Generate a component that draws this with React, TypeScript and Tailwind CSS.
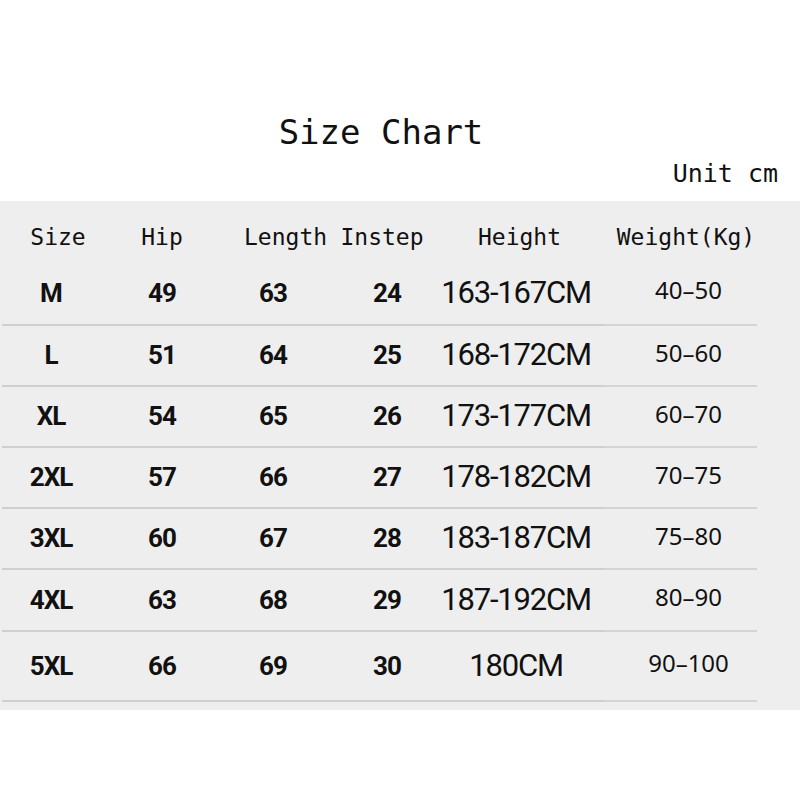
const rows = [
	{ size: 'M', hip: '49', length: '63', instep: '24', height: '163-167CM', weight: '40–50' },
	{ size: 'L', hip: '51', length: '64', instep: '25', height: '168-172CM', weight: '50–60' },
	{ size: 'XL', hip: '54', length: '65', instep: '26', height: '173-177CM', weight: '60–70' },
	{ size: '2XL', hip: '57', length: '66', instep: '27', height: '178-182CM', weight: '70–75' },
	{ size: '3XL', hip: '60', length: '67', instep: '28', height: '183-187CM', weight: '75–80' },
	{ size: '4XL', hip: '63', length: '68', instep: '29', height: '187-192CM', weight: '80–90' },
	{ size: '5XL', hip: '66', length: '69', instep: '30', height: '180CM', weight: '90–100' },
];

const rowHeights = ['h-[64px]', 'h-[61px]', 'h-[61px]', 'h-[61px]', 'h-[61px]', 'h-[62px]', 'h-[70px]'];

export default function App() {
	return (
		<div className="w-[800px] h-[800px] bg-white text-[#111]">
			{/* Title */}
			<div className="pt-[112px] flex justify-center pr-[38px] h-[152px] items-start">
				<h1 className="h-[40px] leading-[40px] text-[34px] font-['DejaVu_Sans_Mono',monospace]">
					Size Chart
				</h1>
			</div>
			<div className="flex justify-end pr-[22px] h-[36px] mt-[3px]">
				<span className="leading-[30px] text-[25px] font-['DejaVu_Sans_Mono',monospace] mt-[4px]">
					Unit cm
				</span>
			</div>

			{/* Table panel */}
			<div className="mt-[10px] h-[509px] bg-[#eeeeee] flex flex-col">
				{/* Header */}
				<div className="h-[61px] pt-[12px] flex items-center text-[23px] font-['DejaVu_Sans_Mono',monospace]">
					<div className="w-[100px] pl-4 text-center">Size</div>
					<div className="w-[124px] text-center">Hip</div>
					<div className="w-[98px] pl-5 text-center">Length</div>
					<div className="w-[113px] pl-[7px] text-center">Instep</div>
					<div className="w-[169px] text-center">Height</div>
					<div className="w-[153px] pl-[11px] text-center whitespace-nowrap">Weight(Kg)</div>
				</div>

				{rows.map((r, i) => (
					<div key={r.size} className={`flex ${rowHeights[i]}`}>
						{/* Left block */}
						<div className="ml-[2px] w-[433px] flex items-center border-b-2 border-[#cfcfcf] font-['Roboto',sans-serif] font-bold text-[26px] tracking-[-1px]">
							<div className="w-[98px] text-center">{r.size}</div>
							<div className="w-[124px] text-center">{r.hip}</div>
							<div className="w-[98px] text-center">{r.length}</div>
							<div className="w-[113px] pl-[17px] text-center">{r.instep}</div>
						</div>
						{/* Height */}
						<div className="w-[169px] flex items-center justify-center pr-[7px] border-b-2 border-[#cfcfcf] font-['Roboto',sans-serif] text-[31px] tracking-[-1.2px]">
							{r.height}
						</div>
						{/* Weight */}
						<div className="w-[153px] flex items-center justify-center pl-[16px] pb-[6px] border-b-2 border-[#d4d4d4] font-['Noto_Sans',sans-serif] text-[24px]">
							{r.weight}
						</div>
					</div>
				))}
			</div>
		</div>
	);
}
